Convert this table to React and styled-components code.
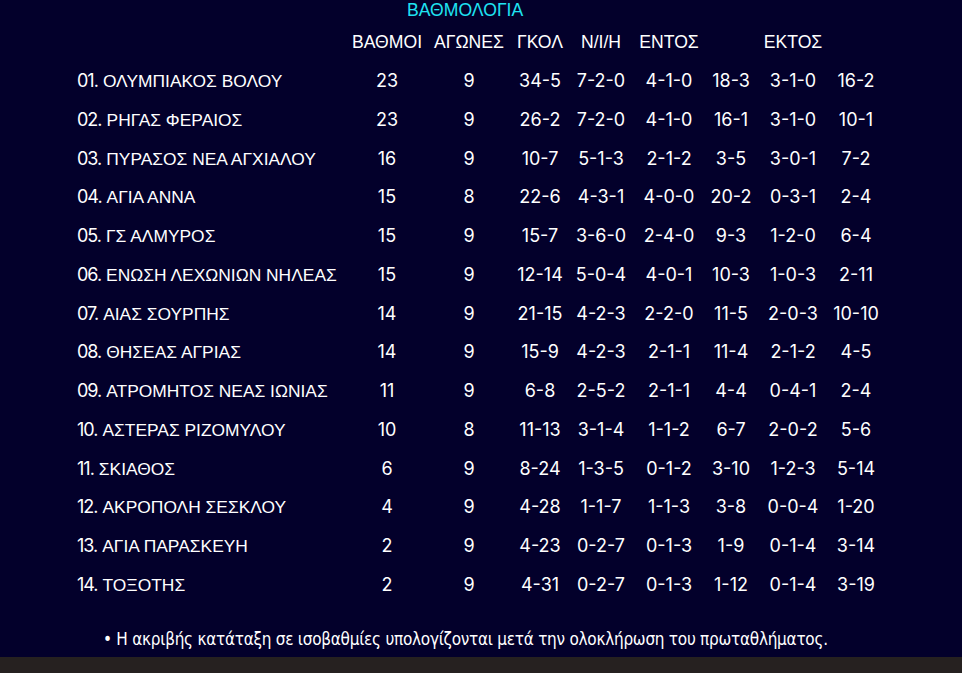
import React from "react";
import styled, { createGlobalStyle } from "styled-components";

const Global = createGlobalStyle`
  html, body { margin: 0; padding: 0; background: #03002b; }
  body { font-family: "Liberation Sans", Arial, sans-serif; color: #fff; }
`;

const teams = [
  ["01", "ΟΛΥΜΠΙΑΚΟΣ ΒΟΛΟΥ", "23", "9", "34-5", "7-2-0", "4-1-0", "18-3", "3-1-0", "16-2"],
  ["02", "ΡΗΓΑΣ ΦΕΡΑΙΟΣ", "23", "9", "26-2", "7-2-0", "4-1-0", "16-1", "3-1-0", "10-1"],
  ["03", "ΠΥΡΑΣΟΣ ΝΕΑ ΑΓΧΙΑΛΟΥ", "16", "9", "10-7", "5-1-3", "2-1-2", "3-5", "3-0-1", "7-2"],
  ["04", "ΑΓΙΑ ΑΝΝΑ", "15", "8", "22-6", "4-3-1", "4-0-0", "20-2", "0-3-1", "2-4"],
  ["05", "ΓΣ ΑΛΜΥΡΟΣ", "15", "9", "15-7", "3-6-0", "2-4-0", "9-3", "1-2-0", "6-4"],
  ["06", "ΕΝΩΣΗ ΛΕΧΩΝΙΩΝ ΝΗΛΕΑΣ", "15", "9", "12-14", "5-0-4", "4-0-1", "10-3", "1-0-3", "2-11"],
  ["07", "ΑΙΑΣ ΣΟΥΡΠΗΣ", "14", "9", "21-15", "4-2-3", "2-2-0", "11-5", "2-0-3", "10-10"],
  ["08", "ΘΗΣΕΑΣ ΑΓΡΙΑΣ", "14", "9", "15-9", "4-2-3", "2-1-1", "11-4", "2-1-2", "4-5"],
  ["09", "ΑΤΡΟΜΗΤΟΣ ΝΕΑΣ ΙΩΝΙΑΣ", "11", "9", "6-8", "2-5-2", "2-1-1", "4-4", "0-4-1", "2-4"],
  ["10", "ΑΣΤΕΡΑΣ ΡΙΖΟΜΥΛΟΥ", "10", "8", "11-13", "3-1-4", "1-1-2", "6-7", "2-0-2", "5-6"],
  ["11", "ΣΚΙΑΘΟΣ", "6", "9", "8-24", "1-3-5", "0-1-2", "3-10", "1-2-3", "5-14"],
  ["12", "ΑΚΡΟΠΟΛΗ ΣΕΣΚΛΟΥ", "4", "9", "4-28", "1-1-7", "1-1-3", "3-8", "0-0-4", "1-20"],
  ["13", "ΑΓΙΑ ΠΑΡΑΣΚΕΥΗ", "2", "9", "4-23", "0-2-7", "0-1-3", "1-9", "0-1-4", "3-14"],
  ["14", "ΤΟΞΟΤΗΣ", "2", "9", "4-31", "0-2-7", "0-1-3", "1-12", "0-1-4", "3-19"],
];

const headers = ["ΒΑΘΜΟΙ", "ΑΓΩΝΕΣ", "ΓΚΟΛ", "Ν/Ι/Η", "ΕΝΤΟΣ", "", "ΕΚΤΟΣ", ""];

const Page = styled.div`
  min-height: 657px;
  background: #03002b;
  display: flex;
  flex-direction: column;
`;

const Title = styled.div`
  font-size: 17.6px;
  line-height: 20px;
  color: #1fe3f2;
  padding-left: 407px;
`;

const Grid = styled.div`
  display: grid;
  grid-template-columns: 275px 70px 94px 48px 74px 62px 62px 62px 64px;
  padding-left: 77px;
  font-size: 17.6px;
`;

const HeadRow = styled.div`
  display: contents;
`;

const HeadCell = styled.div`
  display: flex;
  justify-content: center;
  white-space: nowrap;
  line-height: 20px;
  margin-top: 12px;
  margin-bottom: 9.6px;
`;

const Cell = styled.div`
  display: flex;
  align-items: center;
  justify-content: ${(p) => (p.$left ? "flex-start" : "center")};
  white-space: pre;
  height: 38.77px;
  line-height: 20px;
  font-family: ${(p) =>
    p.$left ? '"Liberation Sans", Arial, sans-serif' : 'Inter, "Liberation Sans", sans-serif'};
  font-size: ${(p) => (p.$left ? "17.4px" : "18px")};
`;

const Rank = styled.span`
  font-family: Inter, "Liberation Sans", sans-serif;
  font-size: 18px;
  letter-spacing: -1px;
  margin-right: 5px;
`;

const Note = styled.div`
  margin-top: 25px;
  padding-left: 103px;
  font-family: "DejaVu Sans Condensed", "Liberation Sans", sans-serif;
  font-size: 17px;
  letter-spacing: -0.26px;
  line-height: 20px;
`;

const BottomBar = styled.div`
  height: 16px;
  background: #262120;
`;

export default function App() {
  return (
    <>
      <Global />
      <Page>
        <Title>ΒΑΘΜΟΛΟΓΙΑ</Title>
        <Grid>
          <HeadRow>
            <HeadCell />
            {headers.map((h, i) => (
              <HeadCell key={i}>{h}</HeadCell>
            ))}
          </HeadRow>
          {teams.map((t) => (
            <React.Fragment key={t[0]}>
              <Cell $left>
                <Rank>{t[0]}.</Rank>
                <span>{t[1]}</span>
              </Cell>
              {t.slice(2).map((v, i) => (
                <Cell key={i}>{v}</Cell>
              ))}
            </React.Fragment>
          ))}
        </Grid>
        <Note>• Η ακριβής κατάταξη σε ισοβαθμίες υπολογίζονται μετά την ολοκλήρωση του πρωταθλήματος.</Note>
      </Page>
      <BottomBar />
    </>
  );
}
